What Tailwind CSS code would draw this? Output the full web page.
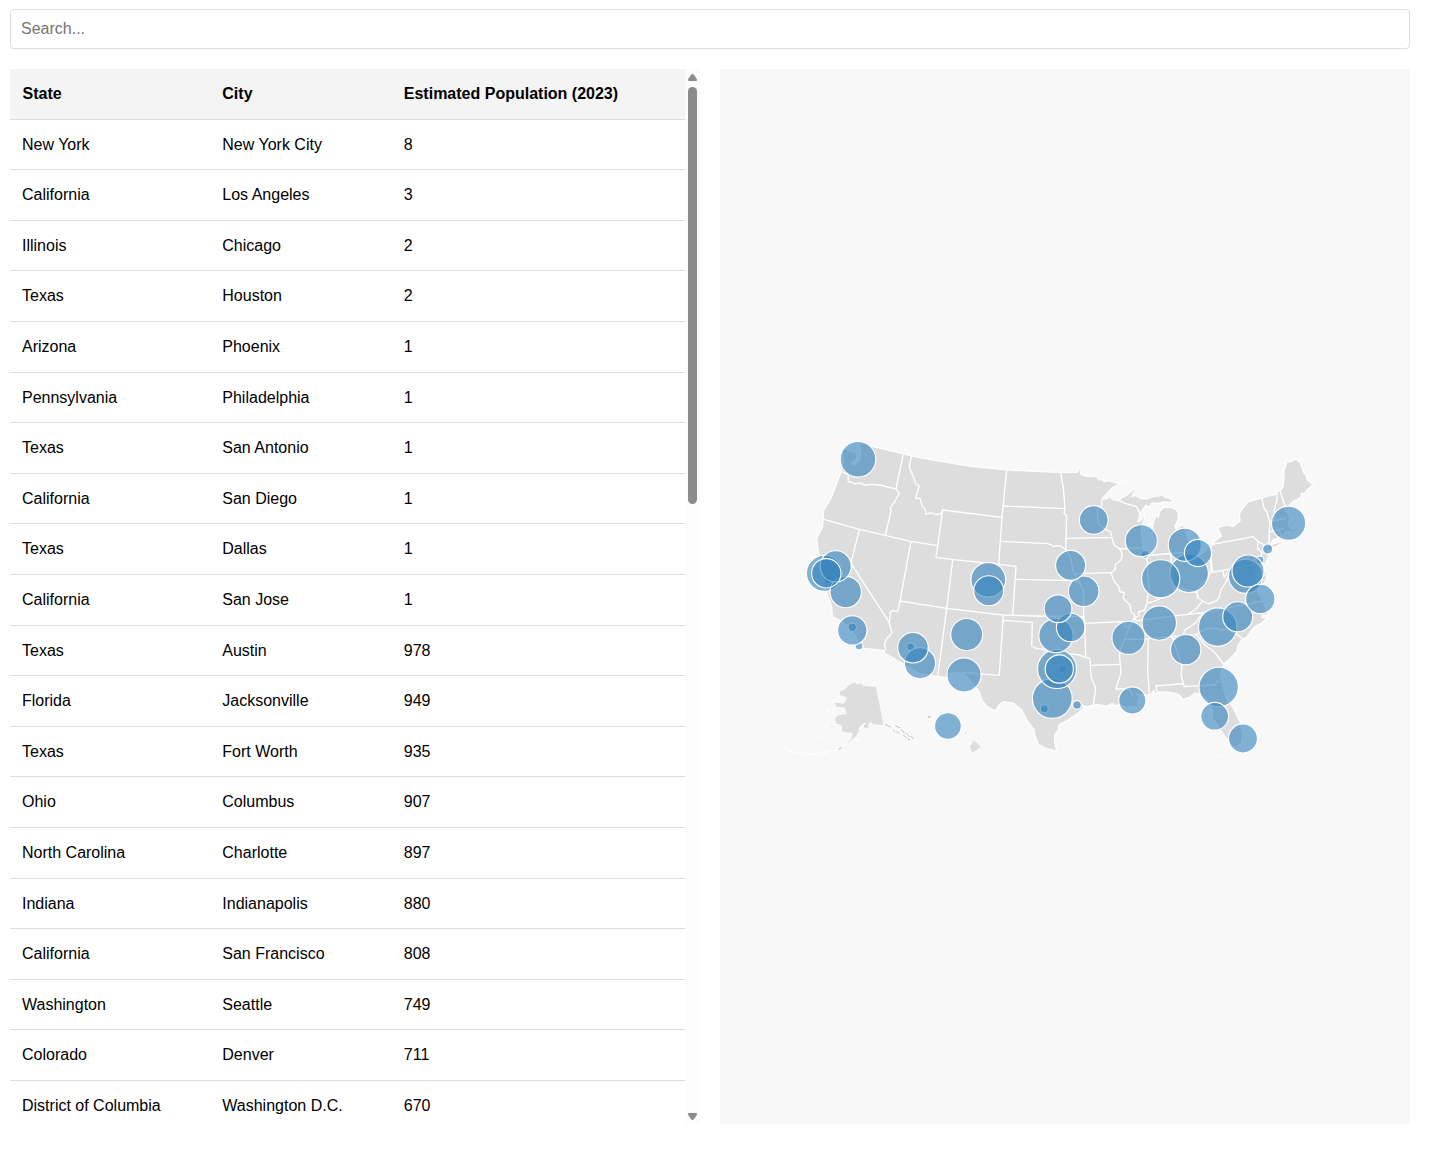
<!DOCTYPE html>
<html lang="en">
<head>
<meta charset="utf-8">
<title>US City Population</title>
<script src="https://cdn.jsdelivr.net/npm/@tailwindcss/browser@4"></script>
</head>
<body class="bg-white text-black text-base font-['Liberation_Sans',Arial,sans-serif]">
<main class="flex flex-col w-[1420px] pl-2.5 pr-2.5 pt-[9px] gap-5">
  <input type="text" placeholder="Search..." class="h-10 w-full rounded border border-[#ddd] px-2.5 text-base placeholder:text-[#757575]">
  <div class="flex gap-5 h-[1055px]">
    <section class="flex w-[690px] overflow-hidden">
      <div id="rows" class="w-[675px] h-full overflow-hidden">
        <div class="grid grid-cols-[200.3px_181.5px_1fr] h-[50.6px] items-center border-b border-[#ddd] bg-[#f4f4f4] font-bold leading-[25.6px]">
          <div class="pl-[12.5px]">State</div><div class="pl-3">City</div><div class="pl-3">Estimated Population (2023)</div>
        </div>
      </div>
      <div class="flex flex-col items-center w-[15px] h-full bg-[#fcfcfc] pt-[5px] pb-[4px] justify-between">
        <div class="flex flex-col items-center gap-[6px]">
          <svg class="w-[9px] h-[7px]" viewBox="0 0 9 7"><path d="M4.5 0Q5.3 0 5.9.8L8.8 5Q9.5 7 8 7H1Q-.5 7 .2 5L3.1.8Q3.7 0 4.5 0Z" fill="#8b8b8b"/></svg>
          <div class="w-[9px] h-[417px] rounded-full bg-[#8b8b8b]"></div>
        </div>
        <svg class="w-[9px] h-[7px]" viewBox="0 0 9 7"><path d="M4.5 7Q5.3 7 5.9 6.2L8.8 2Q9.5 0 8 0H1Q-.5 0 .2 2L3.1 6.2Q3.7 7 4.5 7Z" fill="#8b8b8b"/></svg>
      </div>
    </section>
    <section class="w-[690px] bg-[#f8f8f8]">
      <svg class="block w-[690px] h-[1055px]" viewBox="720 69 690 1055">
        <g fill="#ddd" stroke="#fff" stroke-width="1.2" stroke-linejoin="round">
          <!-- Contiguous states -->
          <path d="M842.3 446.7L850 451 856 453 857 459 852 463 854 465 860 460 861 452 859 444 864 443.5 873.3 446.7 903.3 454 911.3 456 940 461.5 973.3 466.7 1006.7 470 1040 471.7 1060.7 472.3 1077.7 472.5 1078.3 468 1080 469 1081 474.5 1086.7 476.5 1091 476 1096.7 477 1099 480 1102 479.5 1105 482 1108.3 480.5 1115 482.8 1121 482.5 1112 488 1101.7 499.3 1106 499 1112 495.5 1111 498 1114 500 1119 500.5 1122 497.5 1127 495 1131 491.5 1134 488.5 1137 488 1133 493 1132 496.5 1136 495.5 1140 498.3 1147 499 1153 496.5 1160 495.8 1162 494.3 1165 497.5 1170 498.5 1174 501.5 1169 502.5 1164 501.5 1158 503.5 1152 503 1149 507 1146 505 1143 509 1140 514 1138 522 1141 520 1145 513 1144 520 1141 529 1142 538 1143 548 1146 555.5 1150 555.5 1154 549 1155 542 1152.5 532 1153 524 1155 518 1158 514 1158 518 1160 511 1164 507.3 1170 507 1176 509.5 1178.5 513 1178 520 1175 526 1176 529 1179 527 1182 524.3 1185 527 1187 535 1190 544 1186 553 1190 556 1196 557 1204 552 1211 545 1215 541 1221.5 536 1218.3 529 1218.3 527.5 1226.7 525 1233 526.5 1240 521 1239.5 514 1243 508 1248.5 501.7 1261.7 498 1276.7 494 1278 490.3 1280 490.7 1283 487 1284 481 1284 471 1287.3 460.5 1290 462.2 1296 459 1300 462 1304 473.5 1306.5 475.5 1307 480 1309 481 1313.2 484.8 1307 490 1304 494 1302 493 1300 498 1293 501.5 1289 506 1287 512 1290 518 1288 524 1292 530 1297 528 1295 524 1299 529 1293 533 1287 531 1282 536 1273 540 1270 545 1283 541 1282 543 1272 549 1268.5 551 1268 558 1265 565 1261 562 1263 569 1266.5 573 1267 577 1263 586 1261 581 1261 574 1257 568 1255 574 1259 586 1258 592 1263 601 1267 612 1269 615 1262 615 1262 618 1268 617 1261.7 623 1256 626 1251 631 1247 637 1241.7 640 1238 645 1236.7 651.5 1230 659 1225 662.7 1221.7 668 1220.7 677 1224 690 1228 701.7 1232.7 706.7 1240 721.7 1242.7 733 1241.7 743 1236.7 747 1232 746 1227 739 1221.7 732 1216.7 724 1211.7 718.5 1212.7 710 1208 701 1200 694 1195 693 1190 697 1183.3 699.5 1178.3 694.5 1170 692 1160 692 1154 694 1154 690 1151 694 1146.7 695 1137 694 1140 698 1137 703 1140 708 1133 706 1127 708 1120 704 1116 706 1112 703.5 1106.7 706 1098 704.5 1093 705 1086 707 1083 705 1083.5 708.5 1078 713 1068 720 1059 725 1058 731 1055 734 1054.5 741.7 1056.7 751 1046.7 748.5 1038.3 744.5 1034.8 735 1034.3 730 1027 720 1021.7 710 1013.3 703 1003.3 701.7 999 705 995 711 986.7 706 981.7 700 979.3 691.7 970 680 963 673 948 673 947 677.5 937.7 676.5 920 673.7 905 665 883.3 652.3 885 650.5 862.3 648 859 643 855 635 848 626.7 841.7 621 838 619.3 832.3 616.7 831.7 606.7 827 593.3 823 582 826 579 821.5 573 819 556 816.7 538 822.7 526.7 823.5 511 831.7 496.7 841 471.7 843 463Z"/>
          <!-- Alaska and Hawaii, drawn on a grid three times finer -->
          <g transform="translate(770 590) scale(.33333)" stroke-width="2">
            <path d="M240 282L253 276 262 282 271 279 280 286 290 287 306 289 318 288 330 344 342 407 325 405 311 404 302 397 297 404 296 413 284 418 281 406 268 424 260 438 239 457 220 470 243 447 247 430 225 428 214 424 216 408 196 400 194 384 206 374 228 371 224 354 199 352 192 336 222 340 229 323 211 317 206 305 226 296 232 288Z"/>
            <path fill="none" stroke-width="4" stroke-dasharray="11 3 18 2" d="M218 471L205 478 180 484 160 489 135 493 110 491 85 489 62 484 48 472M28 453L14 439"/>
            <path d="M345 404L352 412 361 411M364 418L372 424M378 408L391 412M378 424L388 430M393 417L404 428M399 436L407 443M407 428L421 442M415 446L421 452 426 443 430 446M286 400L266 419M168 358L176 364M184 404L189 410M146 394L150 398M152 438L155 444M260 454L270 448" fill="none" stroke="#fff" stroke-width="6"/>
            <path d="M345 403L362 412M368 419L375 427M376 407L390 414M379 424L388 430M394 418L404 430M400 436L409 442M407 428L421 442M413 447L421 450M424 438L430 447M205 478L216 473M184 407L188 409M281 410L289 404" fill="none" stroke="#bbb" stroke-width="3"/>
            <path d="M471 379L478 376 484 379 479 385 473 384Z" fill="#ccc"/>
            <path d="M453 385L458 383M524 399L530 398 537 405 528 406ZM576 423L582 426M583 427L590 425 594 430 586 433ZM607 448L616 453 625 461 635 471 620 480 608 490 604 485 599 469 606 459Z"/>
          </g>
          <path d="M1215 756.5L1222 756M1225 756L1230 753.5M1121 482.5L1125 480M1127 481L1131 479.5M831 623.5L836 624" fill="none" stroke-width="1.2"/>
        </g>
        <!-- State borders -->
        <g fill="none" stroke="#fff" stroke-width="1.35" stroke-linejoin="round">
          <path d="M841 471.7L848.3 474.3 848.3 481.7 851 482 855 483.8 860 483 865 485 872 484.3 880 485 896 489M903.3 454L896 489 899.3 493.3 895 501 890 508.3 891.3 510 885.3 535.3M824 519.3L859.3 529.3 885.3 535.3 911 541.3 937.3 545.7M911.3 456L909.3 467.3 913 476 916 484 919.3 486 917 493 915.7 498.3 920 498.3 922 506 925 509 926 514 932 513 935 514.5 940.7 514 942.7 510"/>
          <path d="M940.7 514L942.7 510 1002 517.3M942.7 510L936 557.7 998.7 564.3 1016 566.3 1012.7 615M1006.7 470L1002 517.3 998.7 564.3M1004 506L1065 508.7M1001 541.3L1048.3 543.7 1053.3 546.3 1060 545.7 1066 549.3M1060.7 472.3L1063.3 488.3 1065 508.7 1064 512.7 1066.7 516 1066 538.3 1066 549.3 1071 558 1073 571 1077 579 1080 583 1083.5 591 1083.7 616.7 1084.7 623.3 1085.7 657.7M1066 538.3L1111.7 537.3M1075 573.7L1111 572.7M1101.7 499.3L1101.7 506 1097.3 510 1098.3 523.3 1105 529 1110.7 532 1111.7 537.3 1114 545 1120 549 1122.3 554 1121 560 1115 565 1115.5 569 1111 573.3 1114 581 1119 587 1120 592 1124.3 592.5 1123 598 1130 605 1131 612 1135 615 1134 618.5 1130 626 1126 635 1121 648 1119.5 655 1121 673 1115.7 689 1130 688.7 1132 696"/>
          <path d="M1119 500.7L1127 504 1136.7 506.7 1140 514M1118.3 549L1142 547.7M1016 579.3L1073.3 580.7 1080 583M952.7 560L946.7 608.3 937.7 676.5M900 601L946.7 608.3 1003.3 615 1031.7 616 1083.3 616.7M911 541.3L900 601 897.7 611.7 891.7 610.7 890.5 612 889.3 623.3 892 633.3 887 638 884.3 645 886 650M859.3 529.3L851 563.3 889.3 622.7M1003.3 615L999.3 675.3 963 672.3M1003.3 620.3L1032.3 622.3 1031.7 646 1036.7 648.7 1042 649 1046.7 651.3 1058 654 1073.3 654 1079 655 1085.7 657.7 1090 658.7 1091 676.7 1095.7 688.3 1093.3 705M1084.7 623.3L1125 621.5 1125 627 1130 626M1090 665.3L1120 664.3"/>
          <path d="M1125 639.5L1145 639 1170 636.7 1196.7 634.3 1205 629 1217 628 1220 630 1227 629 1236.7 634.3 1243.3 639.3M1148.3 638.3L1147.7 670 1149.3 693.3M1134 618.3L1136.7 620.7 1176.7 615.7 1203.3 612.7 1263 601M1203.3 612.7L1195 623.3 1185 630 1183 635M1196 634.3L1205 645 1213 651 1216.7 655 1223.5 664M1172.3 636.7L1180 661 1182 667 1181 675 1184.3 686.7 1215 685 1217 681 1220 682M1157 692L1156 686 1183 683.5M1134 618.3L1139 616 1138.3 612 1145 610 1146.7 603.3 1155 601 1160 598.3 1172 594 1180 588 1190 590 1196.7 592.5 1198 598 1202.7 601 1196 609 1186.7 615M1202.7 601L1208.3 604 1216 601 1219 598 1220.7 590 1226 582 1228.3 575 1234 574 1238 570M1196.7 592.5L1199 587 1208 578 1211 570 1211 545"/>
          <path d="M1211 558L1212.3 572.3 1258 564M1223 571L1224 577 1228 572M1170.7 553.3L1174 590M1146.7 555.7L1149 586.7 1147 602M1148 555.5L1170.7 553.5 1190 552M1211.7 544.5L1253.3 536.7 1258 541.7 1257.5 548 1262 553 1259 562 1261 567M1258 541.7L1266.7 546M1261.7 498L1264 508 1266.7 511.7 1270 523 1269 532 1269.3 540 1267 548M1276.7 494.3L1277 499 1274.3 510 1274.3 521M1280 490.7L1285 506 1286 512M1270 522L1286 518M1269.3 532L1284 528M1279 529L1281 536M1257 564L1260 574 1265 575"/>
        </g>
        <g id="cities" fill="#3182bd" fill-opacity=".6" stroke="#fff" stroke-width="1.15"></g>
      </svg>
    </section>
  </div>
</main>
<script>
const rows = [
 ["New York","New York City",8],["California","Los Angeles",3],["Illinois","Chicago",2],["Texas","Houston",2],
 ["Arizona","Phoenix",1],["Pennsylvania","Philadelphia",1],["Texas","San Antonio",1],["California","San Diego",1],
 ["Texas","Dallas",1],["California","San Jose",1],["Texas","Austin",978],["Florida","Jacksonville",949],
 ["Texas","Fort Worth",935],["Ohio","Columbus",907],["North Carolina","Charlotte",897],["Indiana","Indianapolis",880],
 ["California","San Francisco",808],["Washington","Seattle",749],["Colorado","Denver",711],["District of Columbia","Washington D.C.",670]
];
document.getElementById("rows").insertAdjacentHTML("beforeend", rows.map(r =>
 `<div class="grid grid-cols-[200.3px_181.5px_1fr] h-[50.6px] items-center border-b border-[#ddd] leading-[25.6px]"><div class="pl-3">${r[0]}</div><div class="pl-3">${r[1]}</div><div class="pl-3">${r[2]}</div></div>`).join(""));
// x, y, radius
const cities = [
 [1267.7,549,5.1],[852.3,627.3,4.2],[1145,554.3,4],[1077,705,4.4],[910.7,646.7,3.9],[1260,560,3.9],[1044.3,708.7,4],
 [859,646,3.9],[1062.5,668.7,3.9],[828,580,3.8],[1052.3,698.5,19.9],[1218.7,686.9,19.7],[1057,669,19.5],[1189.2,573.3,19.2],
 [1217.7,627,19.2],[1160.7,578.8,19.1],[824.5,573.3,18.1],[858,459.3,17.8],[988.3,579.7,17.4],[1245.6,576.3,17.1],
 [1159.3,623,17.2],[1056,635.5,17.2],[964,674.9,17.1],[1288.6,523.2,17.1],[1184.8,544.7,16.6],[1128.5,637.8,16.6],
 [1248,571,16],[1141.3,540.7,16],[966.7,634.5,16],[920,663.2,15.6],[845.7,592,15.7],[835.7,566.3,15.6],
 [1083.7,591.3,15.3],[913,647.7,15.3],[1185.7,649.7,15.2],[1070.6,565.4,15],[988.7,590.7,15],[1237.7,616.7,15],
 [852.3,630.4,14.7],[1260.3,598.9,14.7],[826.3,573.3,14.7],[1243,738.5,14.5],[1093.7,520,14.4],[1070.7,627.5,14.3],
 [1059.3,669,14.1],[1214.7,716.3,13.9],[1058,608.7,13.9],[1198,553,13.6],[1132.3,700.5,13.6],[947.9,726,13.4]
];
document.getElementById("cities").innerHTML = cities.map(([x,y,r]) => `<circle cx="${x}" cy="${y}" r="${r}"/>`).join("");
</script>
</body>
</html>
